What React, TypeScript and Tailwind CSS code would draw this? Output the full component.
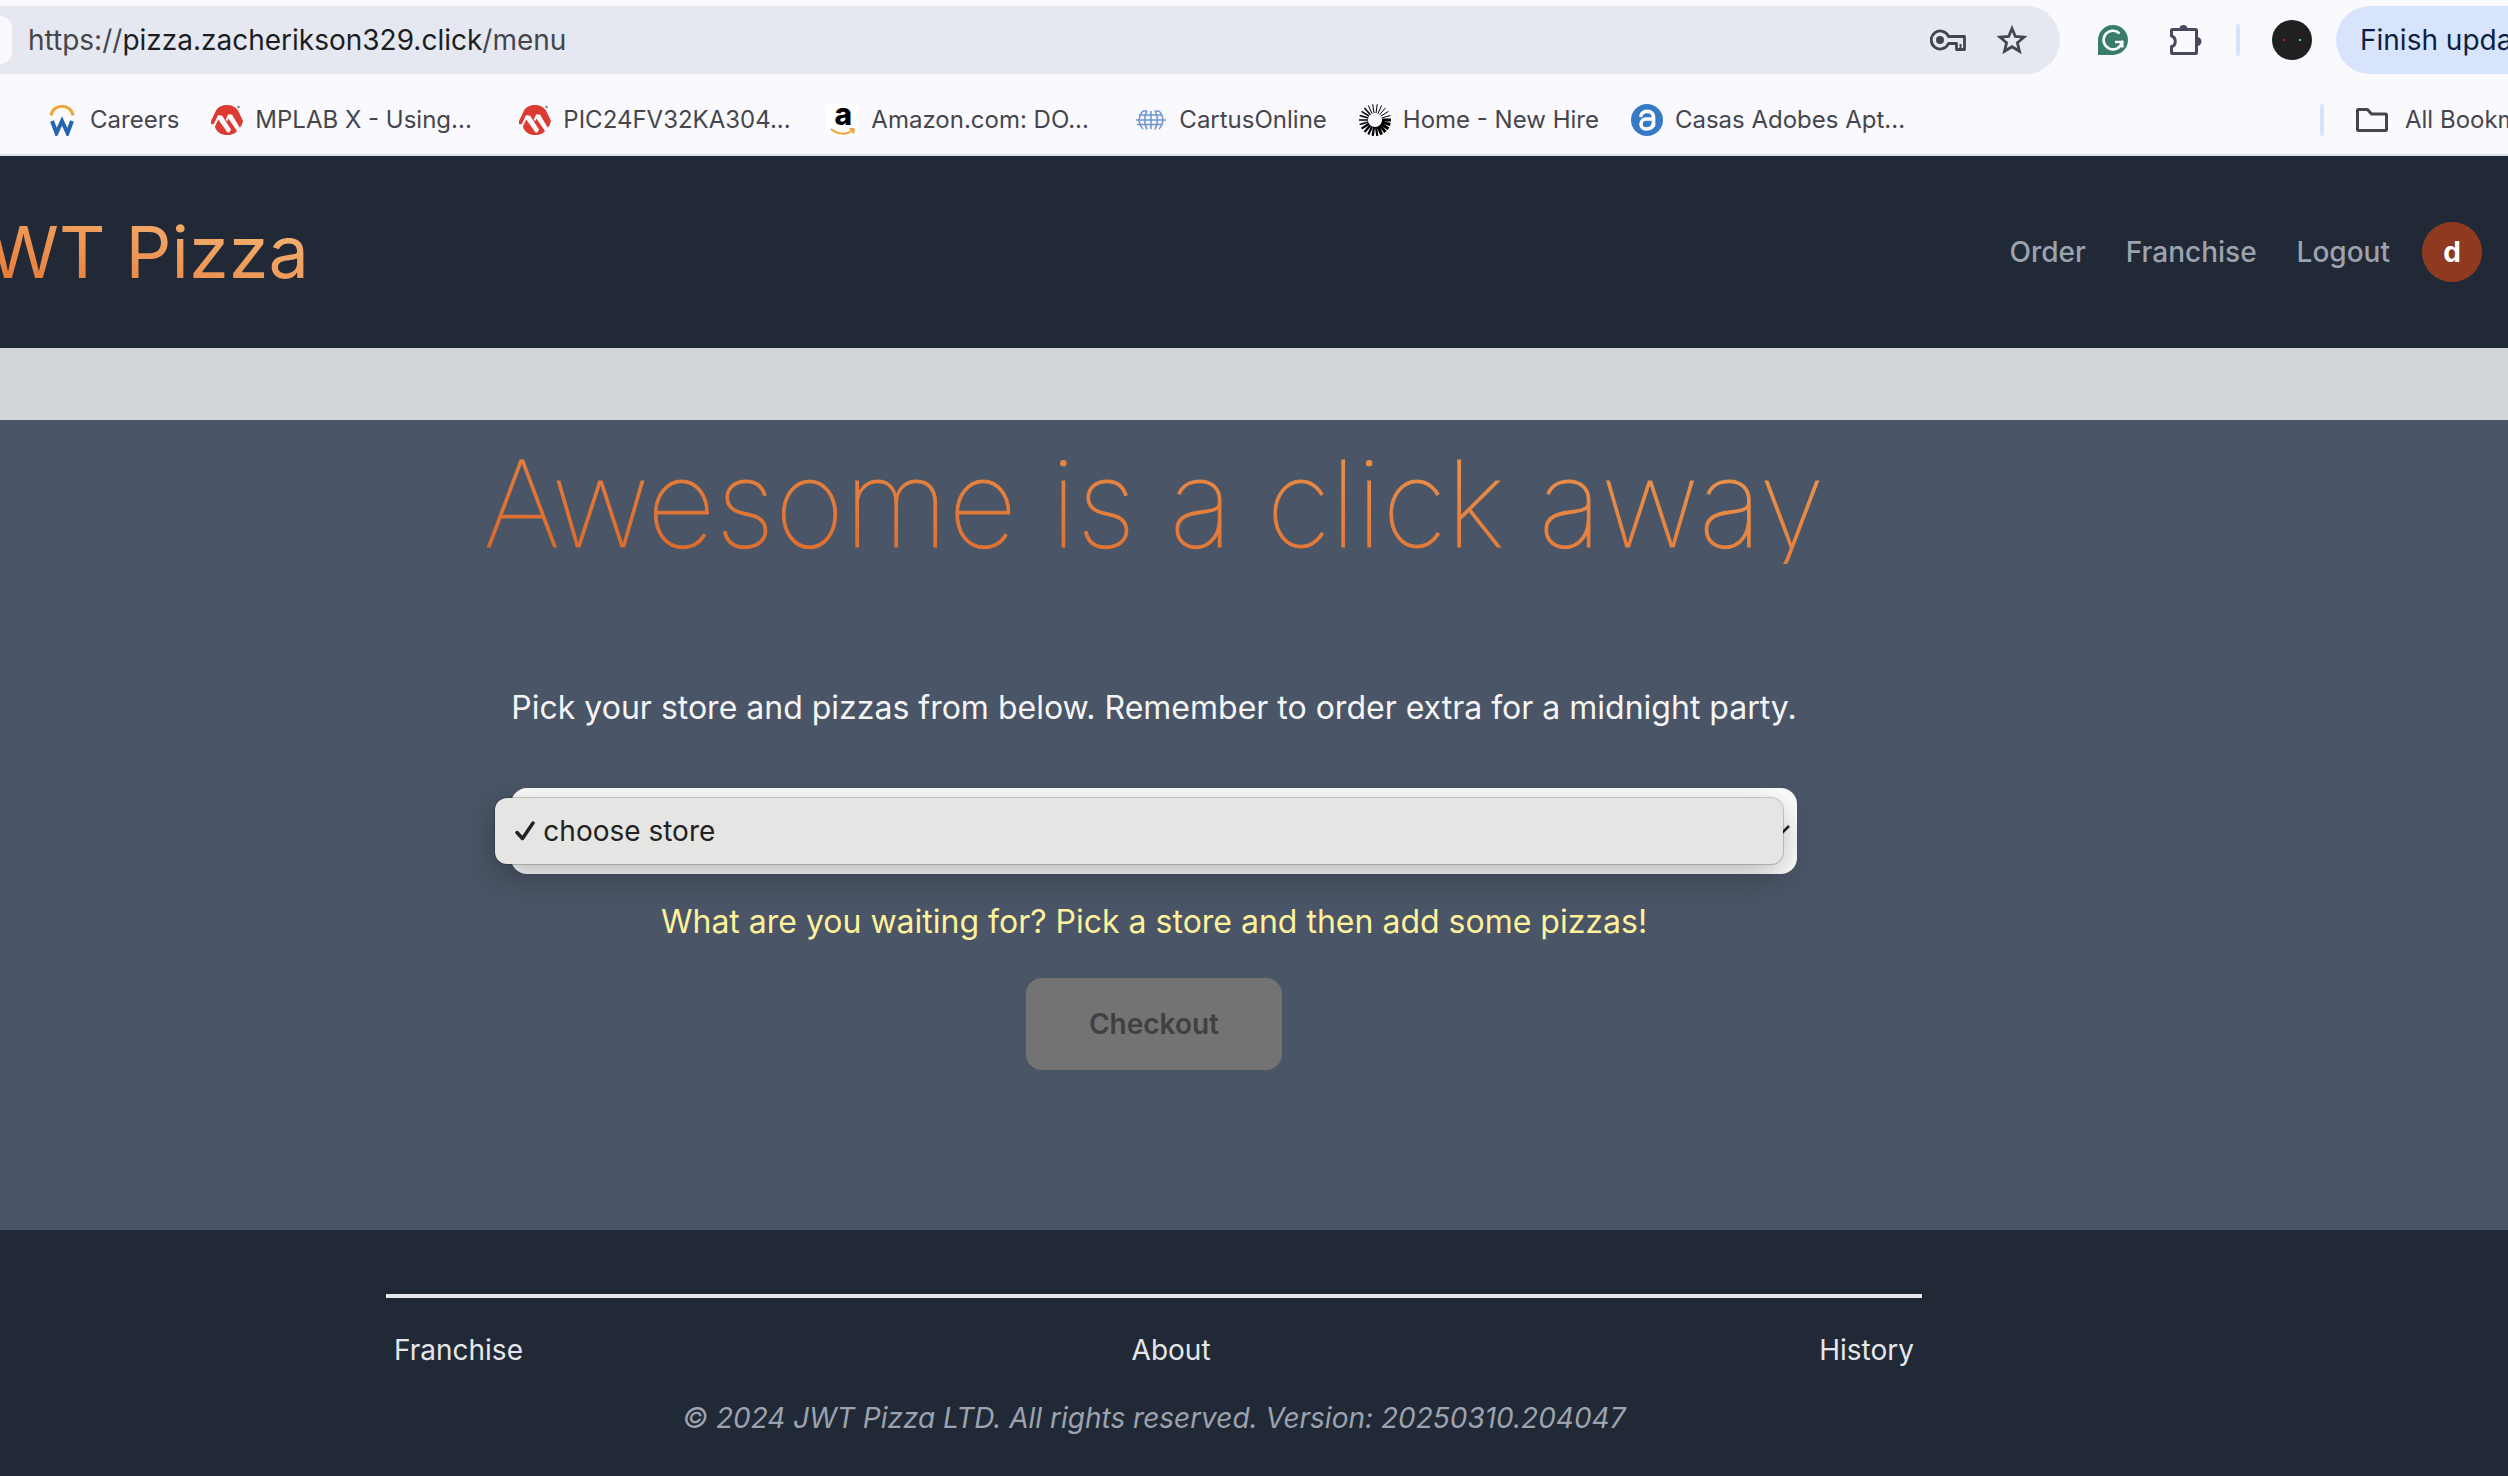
import type { ReactNode } from "react";

function CareersIcon() {
  return (
    <svg viewBox="0 0 32 32" className="size-8" aria-hidden="true">
      <path d="M5 11.500C7 -1 25 -1 27 11.500" fill="none" stroke="#eda63a" strokeWidth="3" />
      <path d="M6 17l4.500 12 5.500-12 5.500 12 4.500-12" fill="none" stroke="#2565ae" strokeWidth="4" />
    </svg>
  );
}

function MicrochipIcon() {
  return (
    <svg viewBox="0 0 32 32" className="size-8" aria-hidden="true">
      <path
        d="M16 1c5 0 8.800 2 11 5.500L32 17l-1.500 4.500L27.500 25C25 29.500 21 31 16 31S7 29 4.500 24.500L3.500 20.500 0 20l0-3L5 6.500C7.500 2.500 11.500 1 16 1z"
        fill="#db3b30"
      />
      <path d="M7.500 11.500h3.500l9 14-1.500 3h-2L6.500 14.500z" fill="#faf9fe" />
      <path d="M17 10.500h4l8.500 14.500-2.500 3.500L17 14z" fill="#faf9fe" />
      <path d="M8 11.500L2 24M18 11l-2.500 5.500" fill="none" stroke="#faf9fe" strokeWidth="2" />
      <circle cx="27.500" cy="3" r="1.200" fill="#777" />
    </svg>
  );
}

function AmazonIcon() {
  return (
    <span className="flex size-8 flex-col items-center overflow-hidden rounded-md bg-white">
      <span className="h-6 text-[30px] leading-5 font-extrabold text-black">a</span>
      <svg viewBox="0 0 26 8" className="h-2 w-7" aria-hidden="true">
        <path d="M1 1c7 6 16 6 22 1M19.500 1.300c4-1.300 5.500-.3 3.500 4" fill="none" stroke="#f3a536" strokeWidth="2" />
      </svg>
    </span>
  );
}

function GlobeIcon() {
  return (
    <svg viewBox="0 0 32 32" className="size-8" fill="none" stroke="#6c94cf" strokeWidth="1.500" aria-hidden="true">
      <path d="M8 7c-5 5-5 13 0 18M24 7c5 5 5 13 0 18M12 6.500c-3 6-3 13 0 19M20 6.500c3 6 3 13 0 19M16 7v18" />
      <path d="M4 11h22M1 16h30M2 20.500h25M8 7l3 0M21 7l3 0" />
    </svg>
  );
}

function SunburstIcon() {
  const rays = Array.from({ length: 22 }, (_, i) => i);
  return (
    <svg viewBox="0 0 32 32" className="size-8" aria-hidden="true">
      {rays.map((i) => {
        const angle = (i * 2 * Math.PI) / 22;
        const x = Math.cos(angle);
        const y = Math.sin(angle);
        const width = i < 5 ? 3 : i < 10 ? 2.2 : i < 15 ? 1.5 : 1;
        return (
          <line
            key={i}
            x1={16 + x * 7}
            y1={16 + y * 7}
            x2={16 + x * 16}
            y2={16 + y * 16}
            stroke="#000"
            strokeWidth={width}
          />
        );
      })}
    </svg>
  );
}

function CasasIcon() {
  return (
    <svg viewBox="0 0 32 32" className="size-8" aria-hidden="true">
      <circle cx="16" cy="16" r="16" fill="#3679c4" />
      <path
        d="M10 11.500C11 6 22.500 5.500 22.500 13v8.500"
        fill="none"
        stroke="#fff"
        strokeWidth="3.600"
        strokeLinecap="round"
      />
      <path
        d="M22 15H15a5 5 0 0 0 0 10c4.500 0 7-2 7.500-5.500"
        fill="none"
        stroke="#fff"
        strokeWidth="3.600"
        strokeLinecap="round"
      />
    </svg>
  );
}

function KeyIcon() {
  return (
    <svg viewBox="0 0 36 24" className="h-6 w-9" fill="none" stroke="#45464c" strokeWidth="2.800" aria-hidden="true">
      <path d="M18.500 8.500A9 9 0 1 0 18.500 15.500h8V21.500h8V8.500z" strokeLinejoin="round" />
      <circle cx="10" cy="12" r="4" fill="#45464c" stroke="none" />
      <path d="M30.500 16v5" strokeWidth="2" />
    </svg>
  );
}

function StarIcon() {
  return (
    <svg viewBox="0 0 32 32" className="size-8" fill="none" stroke="#45464c" strokeWidth="2.800" aria-hidden="true">
      <path d="M16 4.500l3.300 8 8.700.7-6.600 5.600 2.100 8.500L16 22.700l-7.500 4.600 2.100-8.500L4 13.200l8.700-.7z" />
    </svg>
  );
}

function GrammarlyIcon() {
  return (
    <svg viewBox="0 0 30 30" className="size-[30px]" aria-hidden="true">
      <path d="M15 0a15 15 0 1 1 0 30H0V15A15 15 0 0 1 15 0z" fill="#387c6b" />
      <path d="M21.500 8.500A9.300 9.300 0 1 0 24 17h-7M24.300 15.500v7" fill="none" stroke="#fff" strokeWidth="2.600" />
    </svg>
  );
}

function PuzzleIcon() {
  return (
    <svg viewBox="0 0 34 34" className="size-[34px]" aria-hidden="true">
      <path
        d="M4.500 6.500h23a1 1 0 0 1 1 1v22a1 1 0 0 1-1 1h-23a1 1 0 0 1-1-1v-6c5-1 5-9 0-10.500v-5.500a1 1 0 0 1 1-1z"
        fill="none"
        stroke="#454a5c"
        strokeWidth="3"
        strokeLinejoin="round"
      />
      <path d="M11.500 6a4 4 0 0 1 8 0zM29 14a4.500 4.500 0 0 1 0 9z" fill="#454a5c" />
    </svg>
  );
}

function FolderIcon() {
  return (
    <svg viewBox="0 0 34 28" className="h-7 w-[34px]" aria-hidden="true">
      <path
        d="M3.500 3.500h9l4 4.500h14a1 1 0 0 1 1 1v14.500a1 1 0 0 1-1 1h-27a1 1 0 0 1-1-1v-19a1 1 0 0 1 1-1z"
        fill="none"
        stroke="#45464c"
        strokeWidth="3"
        strokeLinejoin="round"
      />
    </svg>
  );
}

function Bookmark({ icon, label, wide }: { icon: ReactNode; label: string; wide?: boolean }) {
  return (
    <a
      href="#"
      className={`flex shrink-0 items-center gap-3 whitespace-nowrap text-[#45464c] ${wide ? "w-[276px]" : ""}`}
    >
      {icon}
      {label}
    </a>
  );
}

function BrowserChrome() {
  return (
    <div className="border-b-2 border-[#dde3ea] bg-[#faf9fe] pt-1.5">
      <div className="flex h-[68px] items-center text-[28px]">
        <div className="flex h-full flex-1 items-center rounded-r-full bg-[#e5e8f1] pr-8">
          <span className="h-12 w-3 rounded-r-full bg-[#faf9fe]" />
          <p className="ml-4 flex-1 text-[#45464c]">
            https://<span className="text-[#1c1d21]">pizza.zacherikson329.click</span>/menu
          </p>
          <button aria-label="Passwords" className="mr-[30px]">
            <KeyIcon />
          </button>
          <button aria-label="Bookmark this page">
            <StarIcon />
          </button>
        </div>
        <div className="flex shrink-0 items-center pl-[38px]">
          <button aria-label="Grammarly">
            <GrammarlyIcon />
          </button>
          <button aria-label="Extensions" className="ml-10">
            <PuzzleIcon />
          </button>
          <span className="ml-[34px] h-8 w-1 rounded-full bg-[#d7e3fb]" />
          <button
            aria-label="Profile"
            className="ml-8 flex size-10 items-center justify-center gap-3.5 rounded-full bg-[#202020]"
          >
            <span className="size-0.5 bg-[#b3261e]" />
            <span className="size-0.5 bg-[#4fd1c5]" />
          </button>
        </div>
        <button className="ml-6 h-full w-[172px] shrink-0 overflow-hidden rounded-l-full bg-[#d8e4fc] pl-6 text-left whitespace-nowrap text-[#0b1f42]">
          Finish update
        </button>
      </div>
      <nav aria-label="Bookmarks" className="flex h-20 items-center overflow-hidden pt-3 pl-[46px] text-[24px]">
        <div className="flex flex-1 items-center gap-8">
          <Bookmark icon={<CareersIcon />} label="Careers" />
          <Bookmark icon={<MicrochipIcon />} label="MPLAB X - Using..." wide />
          <Bookmark icon={<MicrochipIcon />} label="PIC24FV32KA304..." wide />
          <Bookmark icon={<AmazonIcon />} label="Amazon.com: DO..." wide />
          <Bookmark icon={<GlobeIcon />} label="CartusOnline" />
          <Bookmark icon={<SunburstIcon />} label="Home - New Hire" />
          <Bookmark icon={<CasasIcon />} label="Casas Adobes Apt..." />
        </div>
        <span className="h-8 w-1 shrink-0 rounded-full bg-[#d7e3fb]" />
        <button className="ml-[31px] flex w-[153px] shrink-0 items-center gap-4 overflow-hidden whitespace-nowrap text-[#45464c]">
          <span className="shrink-0">
            <FolderIcon />
          </span>
          All Bookmarks
        </button>
      </nav>
    </div>
  );
}

function SiteHeader() {
  return (
    <header className="flex h-48 items-center justify-between overflow-hidden bg-[#212936] pr-[26px]">
      <div className="flex w-[309px] justify-end">
        <span className="shrink-0 bg-linear-to-tr from-[#e46e28] to-[#f5bd7c] bg-clip-text text-[72px] leading-[80px] whitespace-nowrap text-transparent">
          JWT Pizza
        </span>
      </div>
      <nav aria-label="Main" className="flex items-center gap-10 text-[28px] font-medium text-[#9ca3af]">
        <a href="#">Order</a>
        <a href="#">Franchise</a>
        <a href="#">Logout</a>
        <a
          href="#"
          aria-label="Account"
          className="-ml-2 flex size-[60px] items-center justify-center rounded-full bg-[#8f3a20] font-bold text-white"
        >
          d
        </a>
      </nav>
    </header>
  );
}

function StorePicker() {
  return (
    <div className="relative mt-14 w-full">
      <select
        aria-label="Store"
        className="h-[86px] w-full appearance-none rounded-2xl bg-white px-8 text-[28px] text-neutral-800"
      >
        <option>choose store</option>
      </select>
      <svg
        viewBox="0 0 24 14"
        className="pointer-events-none absolute top-9 right-1.5 h-3.5 w-6"
        fill="none"
        stroke="#222"
        strokeWidth="2.500"
        aria-hidden="true"
      >
        <path d="M2 2l10 10L22 2" />
      </svg>
      <ul
        role="listbox"
        aria-label="Stores"
        className="absolute top-2.5 right-3.5 -left-4 flex h-[66px] items-center rounded-xl bg-[#e5e5e3] text-[28px] text-[#222] shadow-[0_0_0_1px_rgba(0,0,0,0.18),0_10px_36px_rgba(0,0,0,0.3)]"
      >
        <li role="option" aria-selected="true" className="flex items-center gap-2 pl-5">
          <svg viewBox="0 0 20 20" className="size-5" fill="none" stroke="#222" strokeWidth="3.500" aria-hidden="true">
            <path d="M2 11.500l5.500 6L18 2" strokeLinecap="round" strokeLinejoin="round" />
          </svg>
          choose store
        </li>
      </ul>
    </div>
  );
}

function Menu() {
  return (
    <main className="flex flex-1 flex-col items-center bg-[#4a5567] pr-[200px] text-[32px] leading-[48px]">
      <h1 className="mt-6 bg-linear-to-tr from-[#dc6527] to-[#f09a50] bg-clip-text text-[120px] leading-[120px] font-thin whitespace-nowrap text-transparent [-webkit-text-stroke:1px_transparent]">
        Awesome is a click away
      </h1>
      <div className="mt-[120px] flex flex-col items-center">
        <p className="whitespace-nowrap text-neutral-100">
          Pick your store and pizzas from below. Remember to order extra for a midnight party.
        </p>
        <StorePicker />
      </div>
      <p className="mt-6 text-[#fef29b]">What are you waiting for? Pick a store and then add some pizzas!</p>
      <button
        disabled
        className="mt-8 h-[92px] w-64 rounded-2xl bg-[#737373] text-[28px] font-semibold text-[#404040]"
      >
        Checkout
      </button>
    </main>
  );
}

function SiteFooter() {
  return (
    <footer className="bg-[#212936] pt-16 pr-[200px] pb-[38px] text-[28px] leading-10">
      <div className="mx-auto w-full max-w-[1536px] border-t-4 border-[#e5e7eb] pt-8">
        <nav aria-label="Footer" className="flex justify-between px-2 text-[#e5e7eb]">
          <a href="#">Franchise</a>
          <a href="#">About</a>
          <a href="#">History</a>
        </nav>
        <p className="mt-7 text-center text-[#9ca3af] italic">
          © 2024 JWT Pizza LTD. All rights reserved. Version: 20250310.204047
        </p>
      </div>
    </footer>
  );
}

export default function App() {
  return (
    <div className="flex min-h-screen flex-col overflow-hidden font-['Inter',sans-serif]">
      <BrowserChrome />
      <SiteHeader />
      <div className="h-[72px] bg-[#d2d5da]" />
      <Menu />
      <SiteFooter />
    </div>
  );
}
